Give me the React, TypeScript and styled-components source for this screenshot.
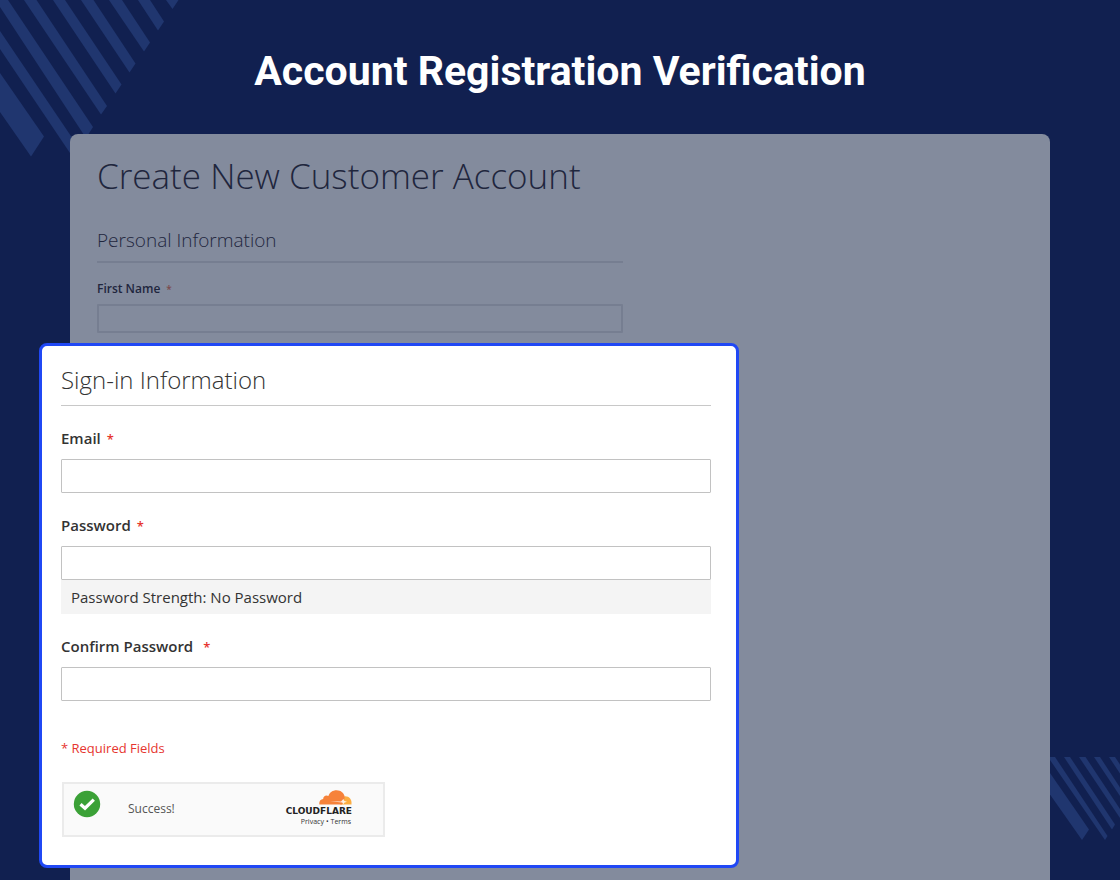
import React from "react";
import styled, { createGlobalStyle } from "styled-components";

const GlobalStyle = createGlobalStyle`
  *, *::before, *::after { box-sizing: border-box; }
  body {
    margin: 0;
    background: #112050;
    font-family: "Open Sans", "Noto Sans", sans-serif;
    color: #333;
  }
`;

const Page = styled.div`
  position: relative;
  min-height: 100vh;
  display: flex;
  flex-direction: column;
  overflow: hidden;
`;

const Stripes = styled.svg<{ $corner: "top" | "bottom" }>`
  position: absolute;
  fill: #20366f;
  ${(p) => (p.$corner === "top" ? "top: 0; left: 0;" : "bottom: 40px; right: 0;")}
`;

const Title = styled.h1`
  margin: 0;
  padding: 47px 24px 39px;
  font: 700 41px/48px Roboto, sans-serif;
  color: #fff;
  text-align: center;
`;

const Panel = styled.main`
  position: relative;
  flex: 1;
  margin: 0 70px;
  padding: 16px 27px 12px;
  border-radius: 8px 8px 0 0;
  background: #838b9d;
  color: #1f263d;
`;

const PanelHeading = styled.h2`
  margin: 0 0 26px;
  font-size: 35px;
  line-height: 52px;
  font-weight: 300;
`;

const PersonalSection = styled.section`
  max-width: 526px;
`;

const Legend = styled.h3<{ $large?: boolean }>`
  margin: 0;
  font-weight: 300;
  font-size: ${(p) => (p.$large ? 24 : 19)}px;
  line-height: ${(p) => (p.$large ? 36 : 24)}px;
  padding-bottom: ${(p) => (p.$large ? 7 : 9)}px;
  border-bottom: ${(p) => (p.$large ? "1px solid #c8c8c8" : "2px solid #767e91")};
`;

const Label = styled.label<{ $large?: boolean }>`
  display: block;
  font-weight: 600;
  font-size: ${(p) => (p.$large ? 15 : 12)}px;
  line-height: ${(p) => (p.$large ? 20 : 16)}px;
  margin: ${(p) => (p.$large ? "22px 0 10px" : "18px 0 7px")};
`;

const Star = styled.span<{ $muted?: boolean; $wide?: boolean }>`
  margin-left: ${(p) => (p.$wide ? 10 : 6)}px;
  font-size: ${(p) => (p.$muted ? 10 : 13)}px;
  color: ${(p) => (p.$muted ? "#7b4a4c" : "#e6352f")};
`;

const Input = styled.input<{ $muted?: boolean }>`
  display: block;
  width: 100%;
  height: ${(p) => (p.$muted ? 29 : 34)}px;
  padding: 0 10px;
  border: ${(p) => (p.$muted ? "2px solid #767e91" : "1px solid #c2c2c2")};
  border-radius: 1px;
  background: ${(p) => (p.$muted ? "transparent" : "#fff")};
  font: 400 15px "Open Sans", sans-serif;
  color: inherit;
  outline: none;
`;

const SignInCard = styled.section`
  position: relative;
  max-width: 700px;
  margin: 10px 0 0 -58px;
  padding: 16px 25px 28px 19px;
  border: 3px solid #2048f5;
  border-radius: 8px;
  background: #fff;
  color: #333;
`;

const Field = styled.div`
  margin-bottom: 22px;
`;

const Strength = styled.div`
  padding: 0 10px;
  background: #f4f4f4;
  font-size: 15px;
  line-height: 34px;
`;

const Required = styled.p`
  margin: 37px 0 24px;
  font-size: 13px;
  line-height: 20px;
  color: #e6352f;
`;

const Widget = styled.div`
  display: flex;
  align-items: center;
  width: 323px;
  height: 55px;
  margin-left: 1px;
  padding: 0 31px 2px 9px;
  border: 2px solid #ebebeb;
  background: #fafafa;
`;

const Check = styled.svg`
  width: 28px;
  height: 28px;
  margin-bottom: 10px;
`;

const Status = styled.span`
  flex: 1;
  margin-left: 27px;
  font-size: 12px;
  line-height: 16px;
  font-weight: 500;
  color: #555;
`;

const Brand = styled.div`
  display: flex;
  flex-direction: column;
  align-items: flex-end;
`;

const Wordmark = styled.span`
  font: 700 9px/10px "DejaVu Sans", sans-serif;
  color: #222;
`;

const Cloud = styled.svg`
  width: 33px;
  height: 16px;
`;

const Links = styled.nav`
  display: flex;
  gap: 2px;
  padding-right: 1px;
  font-size: 7px;
  line-height: 11px;
  color: #333;

  a { color: inherit; text-decoration: none; }
`;

export default function App() {
  return (
    <Page>
      <GlobalStyle />
      <Stripes $corner="top" width="180" height="158" viewBox="0 0 180 158" aria-hidden="true">
        <path d="M0 73 44 136.500 31 156.500 0 112Z" />
        <path d="M0 31 79 148 72 156 0 49Z" />
        <path d="M0 0H8L93 127 86 138 0 7Z" />
        <path d="M24 0H36.500L107 106 101 114.500Z" />
        <path d="M53 0H65L121.500 84.500 115.500 93.500Z" />
        <path d="M81 0H93.500L135.500 63.500 129.500 72.500Z" />
        <path d="M109 0H122L150 42.500 144 51.500Z" />
        <path d="M138 0H150L164 21.500 158 30.500Z" />
        <path d="M166 0H178.500L172.500 9Z" />
      </Stripes>
      <Stripes $corner="bottom" width="70" height="83" viewBox="0 0 70 83" aria-hidden="true">
        <path d="M0 16 39 72.500 32 83 0 37.500Z" />
        <path d="M0 0H5L57.500 79 55 83 0 3Z" />
        <path d="M14 0H20L65 67.500 62 72.500Z" />
        <path d="M29 0H35.500L70 52V61Z" />
        <path d="M44 0H50L70 30.500V39Z" />
        <path d="M59 0H65L70 7.500V16.500Z" />
      </Stripes>

      <Title>Account Registration Verification</Title>

      <Panel>
        <PanelHeading>Create New Customer Account</PanelHeading>
        <PersonalSection>
          <Legend>Personal Information</Legend>
          <Label htmlFor="first-name">
            First Name<Star $muted>*</Star>
          </Label>
          <Input id="first-name" type="text" $muted />
        </PersonalSection>

        <SignInCard>
          <Legend $large>Sign-in Information</Legend>
          <Field>
            <Label $large htmlFor="email">
              Email<Star>*</Star>
            </Label>
            <Input id="email" type="email" />
          </Field>
          <Field>
            <Label $large htmlFor="password">
              Password<Star>*</Star>
            </Label>
            <Input id="password" type="password" />
            <Strength>Password Strength: No Password</Strength>
          </Field>
          <Field>
            <Label $large htmlFor="confirm">
              Confirm Password<Star $wide>*</Star>
            </Label>
            <Input id="confirm" type="password" />
          </Field>
          <Required>* Required Fields</Required>
          <Widget>
            <Check viewBox="0 0 28 28" aria-hidden="true">
              <circle cx="14" cy="14" r="13.200" fill="#3ba137" />
              <path d="M7.500 14.200 12 18.200 20.800 9.600" fill="none" stroke="#fff" strokeWidth="3.200" />
            </Check>
            <Status>Success!</Status>
            <Brand>
              <Cloud viewBox="0 0 33 16" aria-hidden="true">
                <path
                  fill="#fbad41"
                  d="M25.500 6.400C30 6 33 9.200 32.500 14.600H21Z"
                />
                <path
                  fill="#f6823a"
                  d="M.4 14.600C-.2 11.600 1.400 9.200 4.200 9 4 6.400 7 4.600 9.400 6.100 10.600 2.400 13.800.3 17.500.3 22 .3 25 3.100 25.800 7L24.500 12 23 14.600Z"
                />
                <path
                  d="M11 11.300 22 11.600 24.400 9 25.400 11 28 11.800 25.200 12.800 24.400 14.200 23.200 12.500Z"
                  fill="#fff"
                  opacity=".85"
                />
              </Cloud>
              <Wordmark>CLOUDFLARE</Wordmark>
              <Links aria-label="Cloudflare">
                <a href="#privacy">Privacy</a>
                <span>•</span>
                <a href="#terms">Terms</a>
              </Links>
            </Brand>
          </Widget>
        </SignInCard>
      </Panel>
    </Page>
  );
}
